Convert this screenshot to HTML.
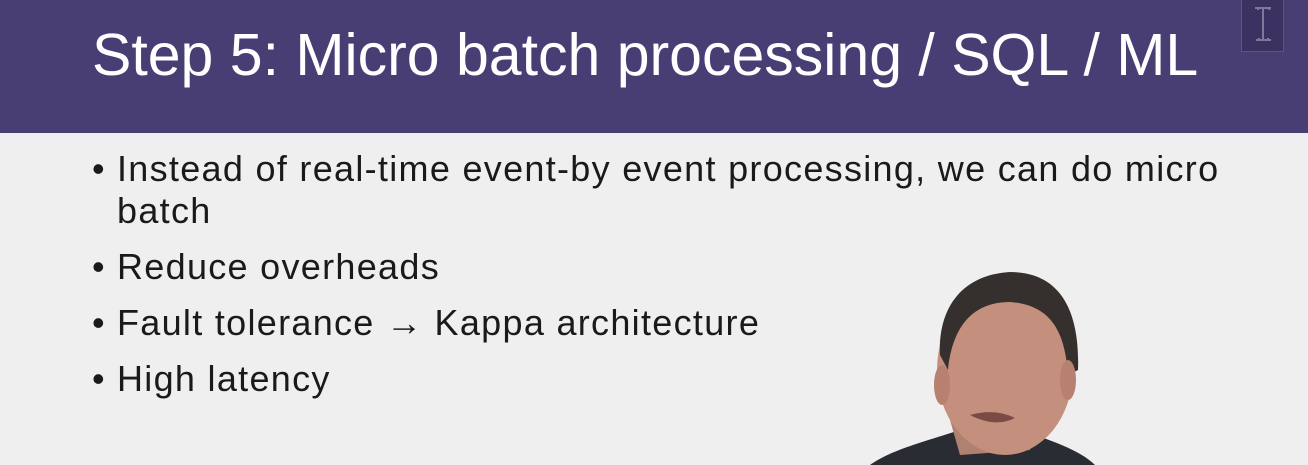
<!DOCTYPE html>
<html><head><style>
body{margin:0;width:1308px;height:465px;overflow:hidden;background:#efefef;font-family:"Liberation Sans",sans-serif;position:relative}
.hdr{position:absolute;left:0;top:0;width:1308px;height:133px;background:#493e74}
.t{position:absolute;left:92px;top:21px;font-size:59px;color:#fff;white-space:nowrap;letter-spacing:0px}
.logo{position:absolute;left:1241px;top:-2px;width:43px;height:54px;background:#3b3262;border:1px solid #5d557f;box-sizing:border-box}
.b{position:absolute;left:92px;font-size:36px;color:#1a1a1a;white-space:nowrap;letter-spacing:1.3px}
.b span{display:inline-block;width:25px}
</style></head><body>
<div class="hdr"><div class="t">Step 5: Micro batch processing / SQL / ML</div>
<div class="logo"><svg width="41" height="52" viewBox="0 0 41 52"><g fill="none" stroke="#7f789c" stroke-width="2"><path d="M13 9h16M14 41h15M21 10v31M16 9v2M27 9v2M17 41v-2M26 41v-2"/></g></svg></div></div>
<div class="b" style="top:148px"><span>•</span>Instead of real-time event-by event processing, we can do micro</div>
<div class="b" style="top:190px;left:117px">batch</div>
<div class="b" style="top:246px"><span>•</span>Reduce overheads</div>
<div class="b" style="top:302px"><span>•</span>Fault tolerance <b style="font-weight:bold">→</b> Kappa architecture</div>
<div class="b" style="top:358px"><span>•</span>High latency</div>
<svg style="position:absolute;left:850px;top:250px" width="260" height="215" viewBox="0 0 260 215">
<path d="M20 215 C40 200 80 190 110 180 L170 180 C200 190 230 200 245 215Z" fill="#2a2c33"/>
<path d="M100 170 L175 170 L180 200 L110 205Z" fill="#b08070"/>
<ellipse cx="155" cy="120" rx="68" ry="85" fill="#c48f7c"/>
<path d="M90 105 C88 60 110 25 160 22 C210 22 230 60 228 120 L218 125 C215 80 200 55 160 52 C120 52 102 80 98 120Z" fill="#35302d"/>
<ellipse cx="92" cy="135" rx="8" ry="20" fill="#b88070"/>
<ellipse cx="218" cy="130" rx="8" ry="20" fill="#b88070"/>
<path d="M120 165 Q145 158 165 168 Q145 178 120 165Z" fill="#7a4a45"/>
</svg>
</body></html>
